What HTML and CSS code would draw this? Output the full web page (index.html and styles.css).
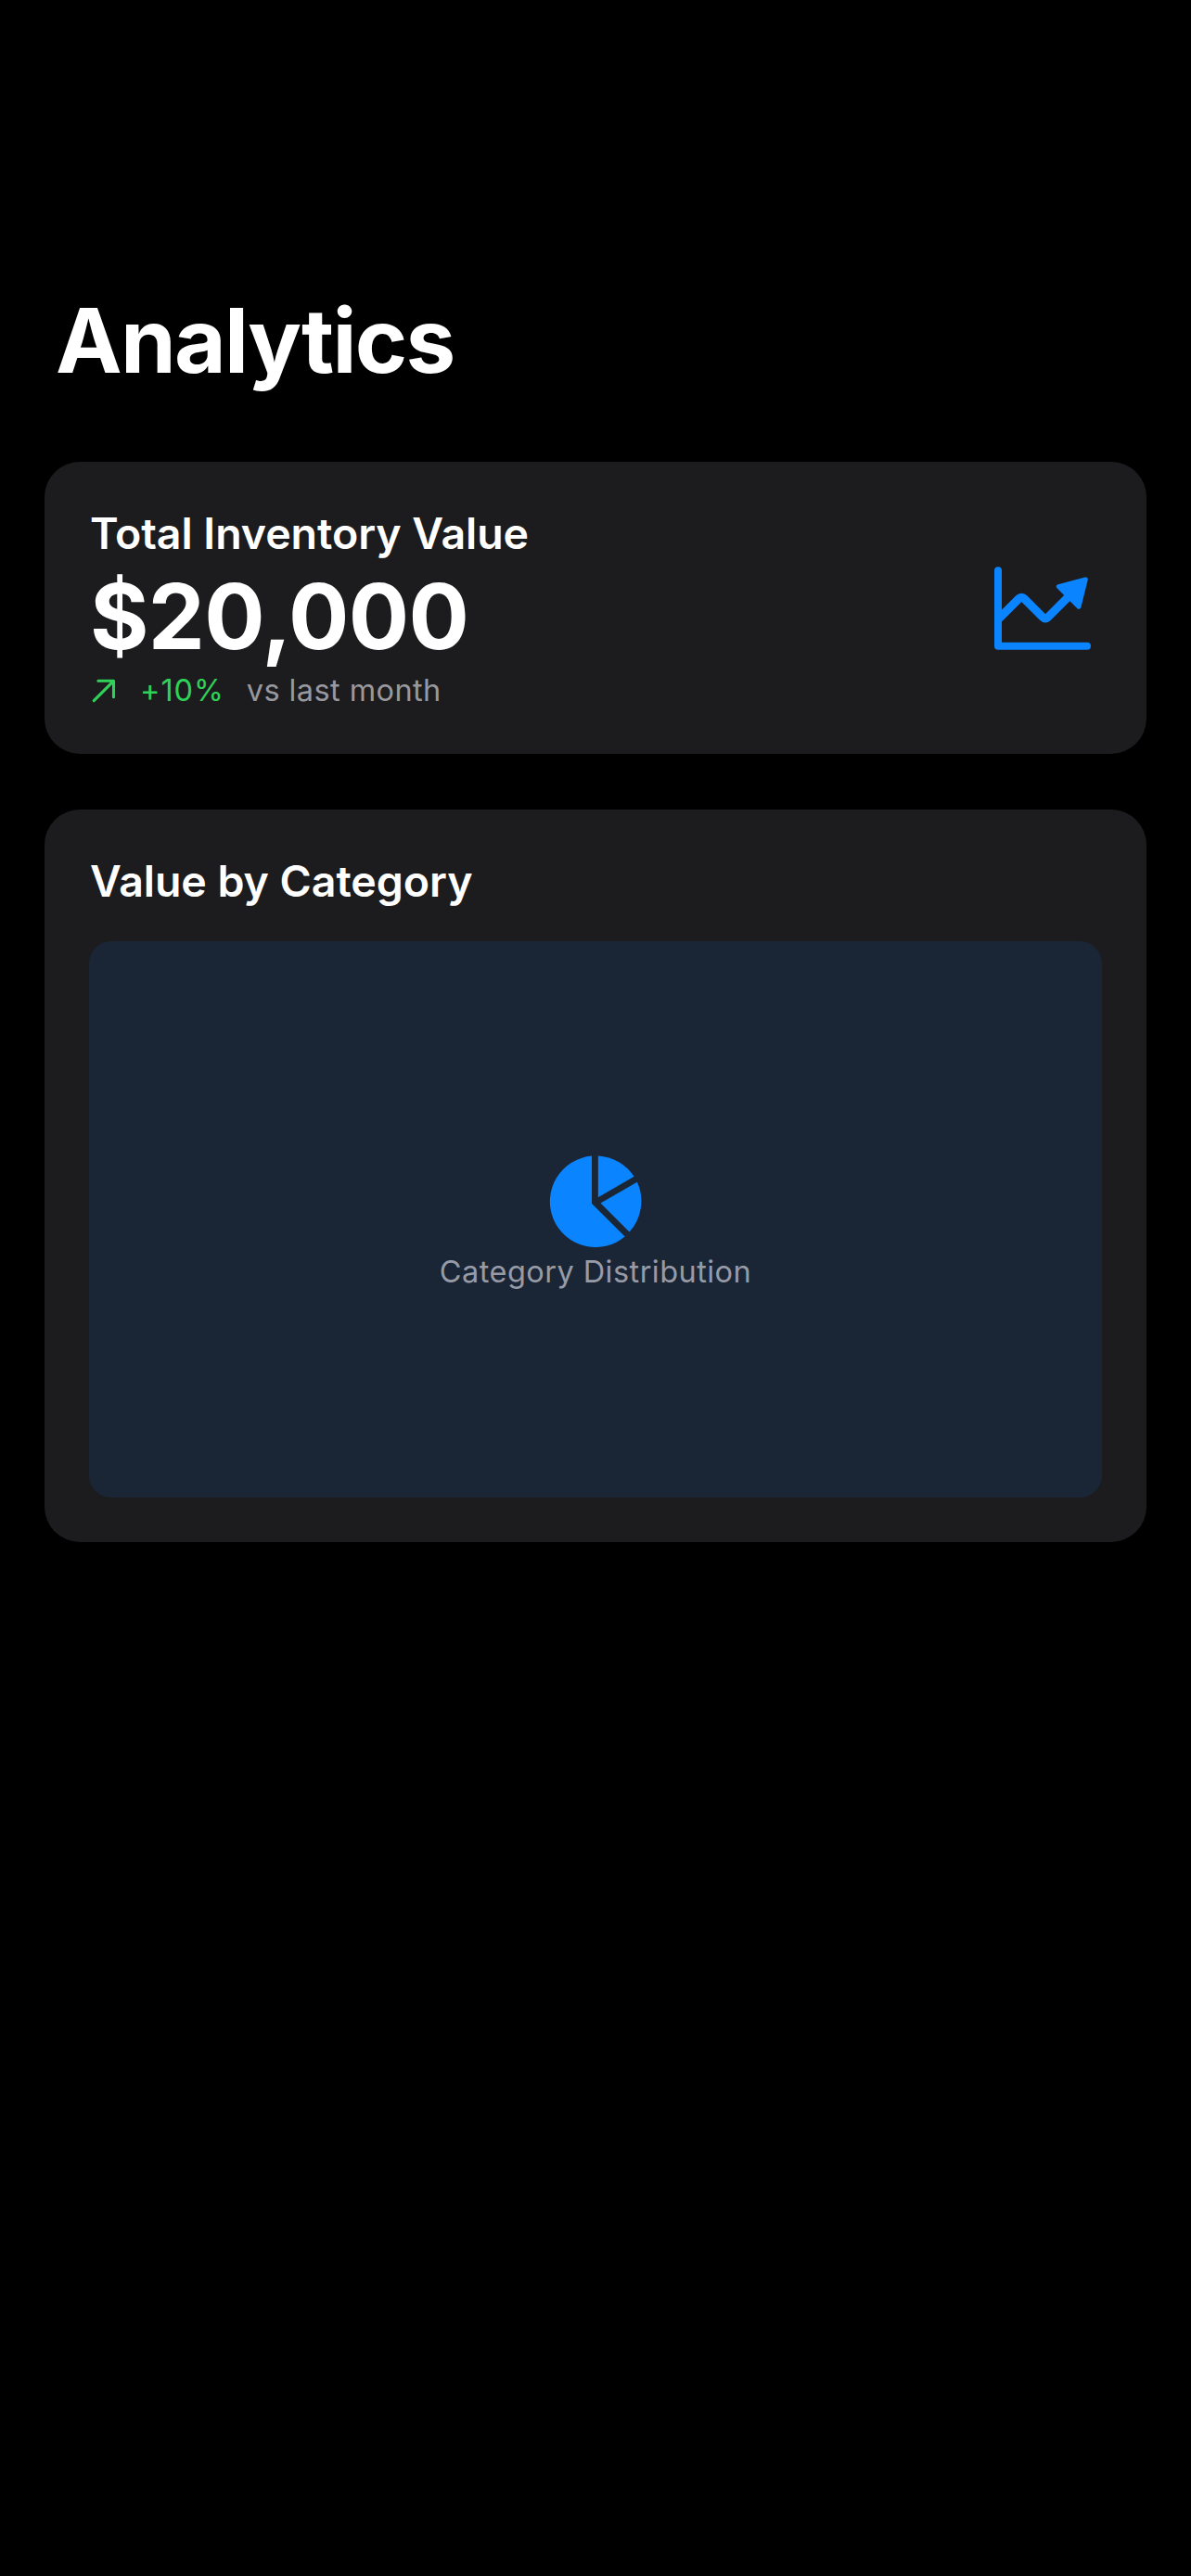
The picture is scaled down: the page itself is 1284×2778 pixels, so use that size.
FILE: index.html
```
<!DOCTYPE html>
<html lang="en">
<head>
  <meta charset="utf-8">
  <title>Analytics</title>
  <link rel="stylesheet" href="styles.css">
</head>
<body>
  <main class="screen">
    <h1 class="page-title">Analytics</h1>

    <section class="card summary">
      <div class="summary-info">
        <h2 class="card-title">Total Inventory Value</h2>
        <p class="amount">$20,000</p>
        <div class="trend">
          <svg class="trend-icon" viewBox="0 0 30 31" aria-hidden="true">
            <path d="M8.9 5.3H25.5V22.7M25.2 5.6L4.2 26.6"/>
          </svg>
          <span class="trend-value">+10%</span>
          <span class="trend-note">vs last month</span>
        </div>
      </div>
      <svg class="chart-icon" viewBox="0 0 104 90" aria-hidden="true">
        <path class="axis" d="M4 4.3V85.8H100"/>
        <path class="line" d="M6 55L26.5 34.5Q29.3 31.7 32.1 34.5L52.2 54.6Q55 57.4 57.8 54.6L84 28.4"/>
        <path class="head" d="M98.3 14L69.3 21.6L91 43.2Z"/>
      </svg>
    </section>

    <section class="card">
      <h2 class="card-title">Value by Category</h2>
      <div class="chart">
        <svg class="pie-icon" viewBox="0 0 100 100" aria-hidden="true">
          <path d="M46 1.6V52.3Q46 53 46.5 53.5L81.7 88.6A49.3 49.3 0 1 1 46 1.6Z"/>
          <path d="M52.8 1.5A49.3 49.3 0 0 1 91.6 23.8L52.8 46.2Z"/>
          <path d="M94.9 29.8A49.3 49.3 0 0 1 86.5 83.6L55.5 52.6Z"/>
        </svg>
        <p class="chart-label">Category Distribution</p>
      </div>
    </section>
  </main>
</body>
</html>
```
FILE: styles.css
```
* {
  box-sizing: border-box;
  margin: 0;
  padding: 0;
}

body {
  background: #000;
  color: #fff;
  font-family: Inter, "Liberation Sans", sans-serif;
}

.screen {
  display: flex;
  flex-direction: column;
  min-height: 2778px;
  padding: 309px 48px 0;
}

.page-title {
  margin-bottom: 73px;
  padding-left: 12px;
  font-size: 96px;
  font-weight: 700;
  line-height: 116px;
  letter-spacing: -1.72px;
}

.card {
  margin-bottom: 60px;
  padding: 48px;
  border-radius: 38px;
  background: #1c1c1e;
}

.summary {
  display: flex;
  align-items: center;
  justify-content: space-between;
}

.card-title {
  padding-left: 1px;
  font-size: 46.5px;
  font-weight: 600;
  line-height: 58px;
  letter-spacing: -0.05px;
}

.amount {
  margin-top: 3px;
  padding-left: 1px;
  font-size: 97px;
  font-weight: 700;
  line-height: 116px;
  letter-spacing: -0.68px;
}

.trend {
  display: flex;
  align-items: center;
  gap: 24px;
  margin-top: 1px;
  padding-left: 1px;
  font-size: 32.5px;
  line-height: 41px;
}

.trend-icon {
  width: 30px;
  height: 31px;
  fill: none;
  stroke: #30d158;
  stroke-width: 3.1;
  stroke-linecap: round;
  stroke-linejoin: round;
}

.trend-value {
  color: #30d158;
  letter-spacing: 0.9px;
}

.trend-note {
  color: #98989f;
  letter-spacing: 0.41px;
}

.chart-icon {
  width: 104px;
  height: 90px;
  margin-right: 12px;
  stroke: #0a84ff;
  stroke-linecap: round;
  stroke-linejoin: round;
}

.axis,
.line {
  fill: none;
}

.axis {
  stroke-width: 8;
}

.line {
  stroke-width: 8.9;
}

.head {
  fill: #0a84ff;
  stroke-width: 5;
}

.chart {
  display: flex;
  flex-direction: column;
  align-items: center;
  justify-content: center;
  gap: 7px;
  height: 600px;
  margin-top: 36px;
  padding-top: 7px;
  border-radius: 24px;
  background: #1a2635;
}

.pie-icon {
  width: 100px;
  height: 100px;
  fill: #0a84ff;
}

.chart-label {
  color: #969ba7;
  font-size: 32.5px;
  line-height: 40px;
  letter-spacing: 0.45px;
}
```
